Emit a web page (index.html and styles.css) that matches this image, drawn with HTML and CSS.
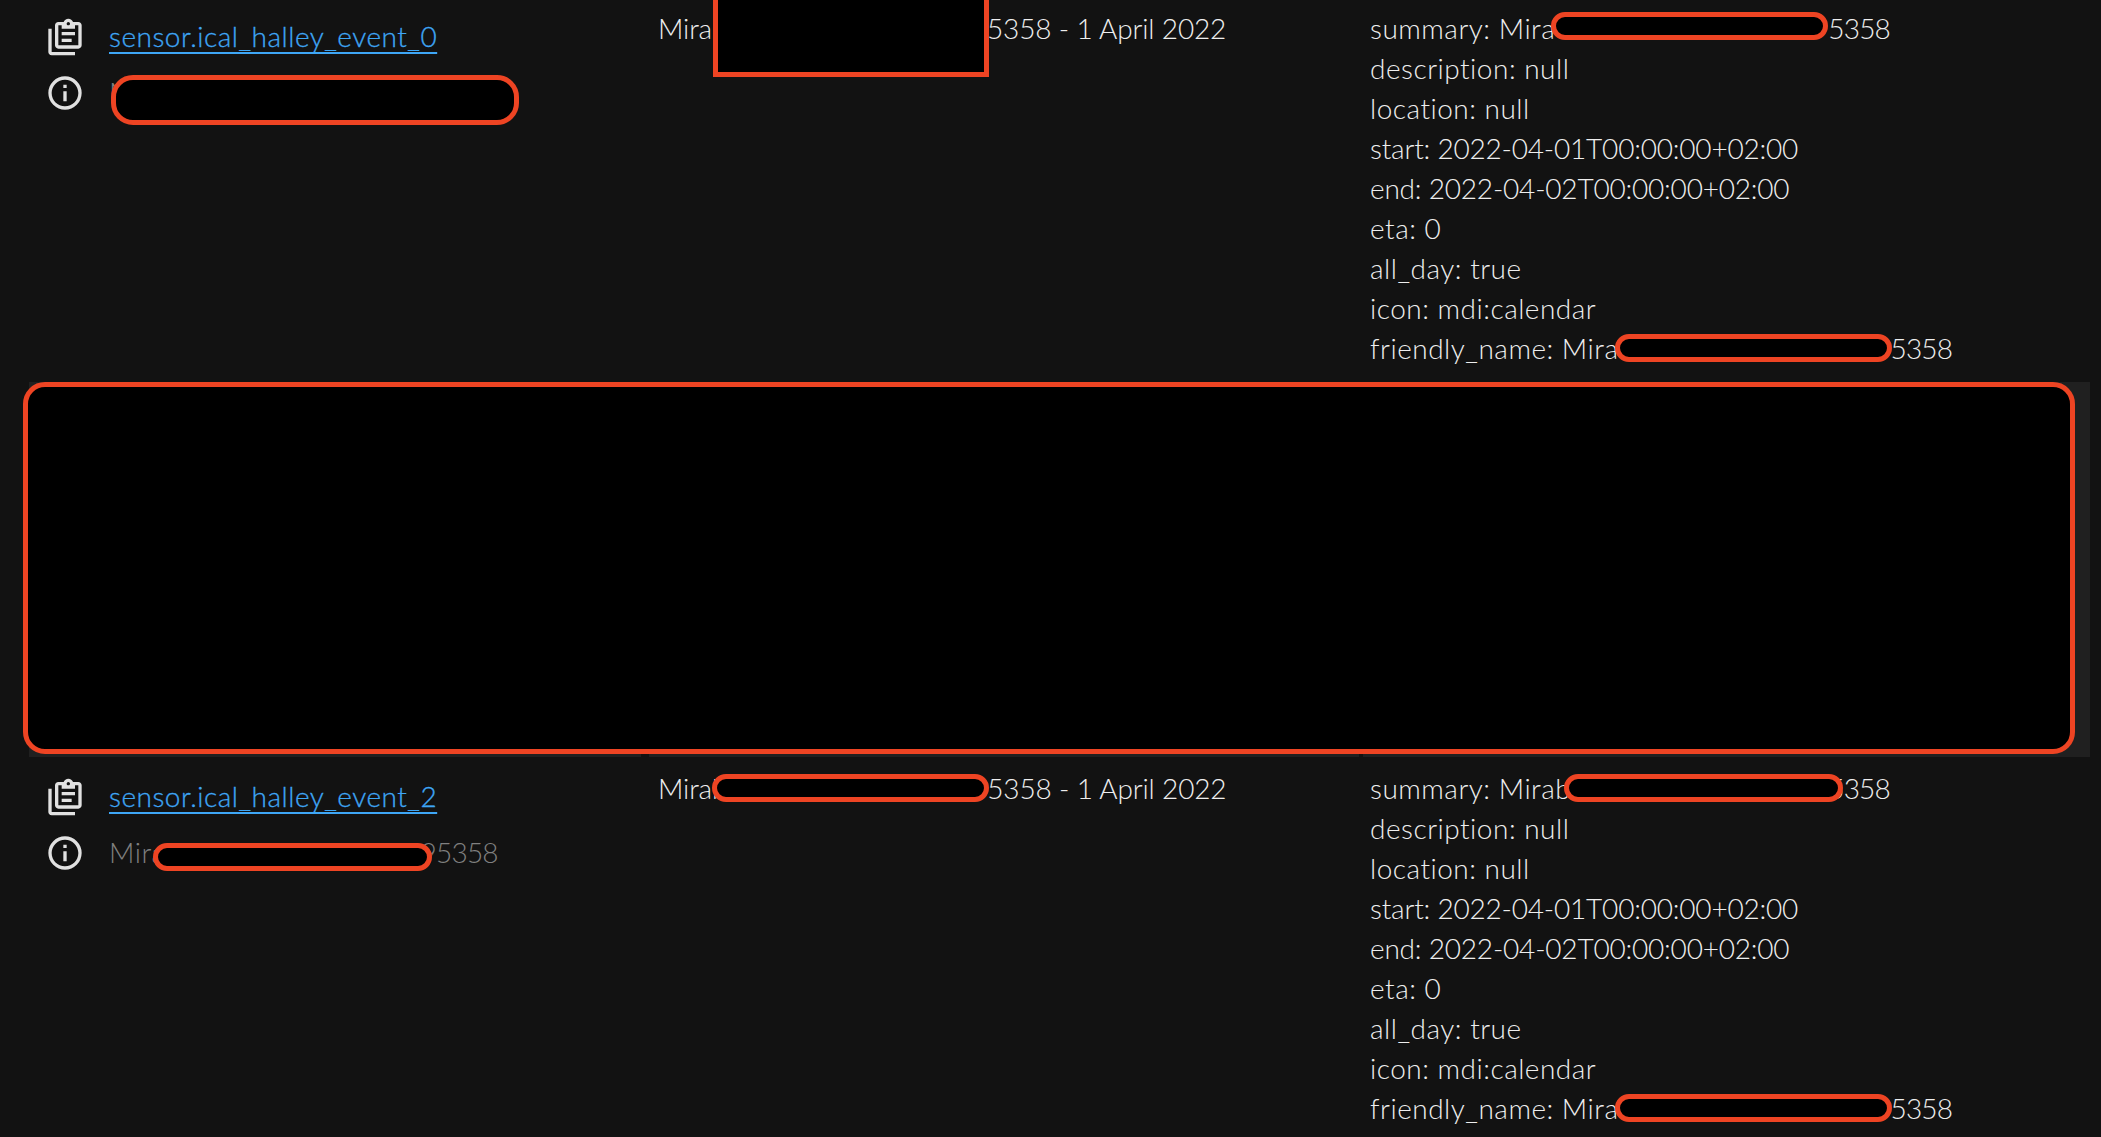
FILE: index.html
```html
<!DOCTYPE html>
<html lang="en">
<head>
<meta charset="utf-8">
<title>States</title>
<link rel="stylesheet" href="styles.css">
</head>
<body>
<div class="states">
  <div class="row row-first">
    <div class="cell-entity">
      <div class="entity-line">
        <svg class="icon" viewBox="0 0 24 24"><path d="M4 7V21H18V23H4C2.9 23 2 22.1 2 21V7H4M20 3C21.1 3 22 3.9 22 5V17C22 18.1 21.1 19 20 19H8C6.9 19 6 18.1 6 17V5C6 3.9 6.9 3 8 3H11.18C11.6 1.84 12.7 1 14 1C15.3 1 16.4 1.84 16.82 3H20M14 3C13.45 3 13 3.45 13 4C13 4.55 13.45 5 14 5C14.55 5 15 4.55 15 4C15 3.45 14.55 3 14 3M10 7V5H8V17H20V5H18V7H10M18 11H10V9H18V11M16 15H10V13H16V15Z"/></svg>
        <a class="entity-link" href="#">sensor.ical_halley_event_0</a>
      </div>
      <div class="entity-line">
        <svg class="icon" viewBox="0 0 24 24"><path d="M11,9H13V7H11V9M12,20C7.59,20 4,16.41 4,12C4,7.59 7.59,4 12,4C16.41,4 20,7.59 20,12C20,16.41 16.41,20 12,20M12,2A10,10 0 0,0 2,12A10,10 0 0,0 12,22A10,10 0 0,0 22,12A10,10 0 0,0 12,2M11,17H13V11H11V17Z"/></svg>
        <span class="entity-name">M<i class="pill pill-name"></i></span>
      </div>
    </div>
    <div class="cell-state">Mira<i class="block-top"></i>5358 - 1 April 2022</div>
    <div class="cell-attrs">
      <div>summary: Mira<i class="pill pill-a"></i><span class="num">5358</span></div>
      <div>description: null</div>
      <div>location: null</div>
      <div class="stamp">start: 2022-04-01T00:00:00+02:00</div>
      <div class="stamp">end: 2022-04-02T00:00:00+02:00</div>
      <div>eta: 0</div>
      <div>all_day: true</div>
      <div>icon: mdi:calendar</div>
      <div>friendly_name: Mira<i class="pill pill-b"></i><span class="num">5358</span></div>
    </div>
  </div>
  <div class="row row-hidden">
    <div class="band"></div>
    <div class="band band-mid"></div>
    <div class="band band-end"></div>
    <i class="cover"></i>
  </div>
  <div class="row">
    <div class="cell-entity">
      <div class="entity-line">
        <svg class="icon" viewBox="0 0 24 24"><path d="M4 7V21H18V23H4C2.9 23 2 22.1 2 21V7H4M20 3C21.1 3 22 3.9 22 5V17C22 18.1 21.1 19 20 19H8C6.9 19 6 18.1 6 17V5C6 3.9 6.9 3 8 3H11.18C11.6 1.84 12.7 1 14 1C15.3 1 16.4 1.84 16.82 3H20M14 3C13.45 3 13 3.45 13 4C13 4.55 13.45 5 14 5C14.55 5 15 4.55 15 4C15 3.45 14.55 3 14 3M10 7V5H8V17H20V5H18V7H10M18 11H10V9H18V11M16 15H10V13H16V15Z"/></svg>
        <a class="entity-link" href="#">sensor.ical_halley_event_2</a>
      </div>
      <div class="entity-line">
        <svg class="icon" viewBox="0 0 24 24"><path d="M11,9H13V7H11V9M12,20C7.59,20 4,16.41 4,12C4,7.59 7.59,4 12,4C16.41,4 20,7.59 20,12C20,16.41 16.41,20 12,20M12,2A10,10 0 0,0 2,12A10,10 0 0,0 12,22A10,10 0 0,0 22,12A10,10 0 0,0 12,2M11,17H13V11H11V17Z"/></svg>
        <span class="entity-name">Mira<i class="pill pill-c"></i><span class="num">95358</span></span>
      </div>
    </div>
    <div class="cell-state">Mirab<i class="pill pill-d"></i>5358 - 1 April 2022</div>
    <div class="cell-attrs">
      <div>summary: Mirab<i class="pill pill-e"></i><span class="num">5358</span></div>
      <div>description: null</div>
      <div>location: null</div>
      <div class="stamp">start: 2022-04-01T00:00:00+02:00</div>
      <div class="stamp">end: 2022-04-02T00:00:00+02:00</div>
      <div>eta: 0</div>
      <div>all_day: true</div>
      <div>icon: mdi:calendar</div>
      <div>friendly_name: Mira<i class="pill pill-b"></i><span class="num">5358</span></div>
    </div>
  </div>
</div>
</body>
</html>
```
FILE: styles.css
```css
html, body {
  margin: 0;
  height: 100%;
  overflow: hidden;
  background: #121212;
}
body {
  font-family: "Lato", "Open Sans", sans-serif;
  font-weight: 300;
  font-size: 28px;
  line-height: 40px;
  letter-spacing: 0.5px;
  color: #eeeeee;
}
.states {
  margin: -3px 11px 0 29px;
}
.row {
  display: grid;
  grid-template-columns: 612px 718px 1fr;
  padding: 11px 0 14px;
}
.row-hidden {
  position: relative;
  height: 375px;
  padding: 0;
}
.band {
  background: #202020;
}
.band-mid {
  margin-left: 8px;
}
.band-end {
  margin-left: 4px;
}
.cover {
  position: absolute;
  left: -6px;
  top: 0;
  right: 15px;
  bottom: 3px;
  box-sizing: border-box;
  background: #000;
  border: 5px solid #ee4423;
  border-radius: 22px;
}
.cell-entity {
  display: flex;
  flex-direction: column;
  gap: 16px;
  padding: 9px 0 0 16px;
}
.cell-state {
  padding-left: 17px;
  letter-spacing: -0.15px;
  white-space: nowrap;
}
.cell-attrs {
  padding-left: 11px;
  white-space: nowrap;
}
.stamp {
  letter-spacing: -0.2px;
}
.num {
  letter-spacing: -0.8px;
}
.entity-line {
  display: flex;
  align-items: center;
  gap: 24px;
  height: 40px;
}
.icon {
  width: 40px;
  height: 40px;
  fill: #e1e1e1;
  flex: none;
}
.entity-link {
  padding-bottom: 2px;
  color: #3ea6f5;
  -webkit-text-stroke: 0.3px #3ea6f5;
  text-decoration: underline;
  text-underline-offset: 5px;
  text-decoration-thickness: 2px;
}
.entity-name {
  padding-bottom: 2px;
  color: #808080;
  white-space: nowrap;
}
.pill {
  position: relative;
  display: inline-block;
  box-sizing: border-box;
  height: 28px;
  margin: -14px 0 -6px;
  vertical-align: middle;
  background: #000;
  border: 5px solid #ee4423;
  border-radius: 14px;
}
.pill-name {
  width: 408px;
  height: 50px;
  margin: -6px 0 -14px -24px;
  border-radius: 22px;
}
.pill-a {
  width: 277px;
  margin: -16px 0 -4px -4px;
}
.pill-b {
  width: 277px;
  margin-left: -3px;
  margin-right: -2px;
}
.pill-c {
  width: 279px;
  margin: -9px -11px -11px -13px;
}
.pill-d {
  width: 277px;
  margin-left: -15px;
  margin-right: -2px;
}
.pill-e {
  width: 279px;
  margin-left: -7px;
  margin-right: -15px;
}
.block-top {
  position: relative;
  display: inline-block;
  box-sizing: border-box;
  width: 276px;
  height: 77px;
  margin: -8px -2px -50px 1px;
  vertical-align: top;
  background: #000;
  border: 5px solid #ee4423;
  border-top: 0;
}
```
